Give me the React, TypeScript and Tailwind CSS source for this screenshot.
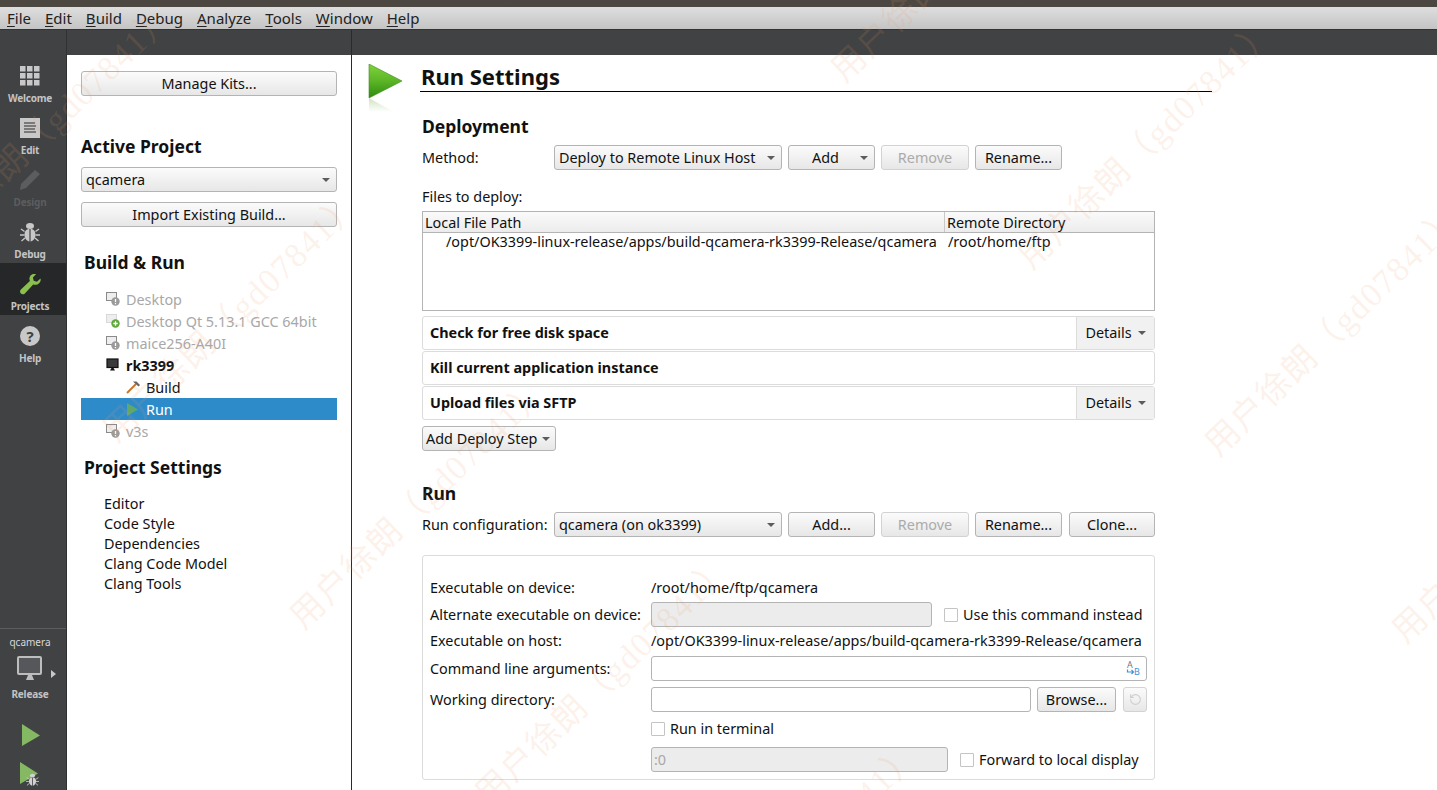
import { ReactNode } from "react";
import { RotateCcw } from "lucide-react";

const menus = ["File", "Edit", "Build", "Debug", "Analyze", "Tools", "Window", "Help"];

// watermark copies, written out so the classes get built
const marks = [
  "left-[960px] top-[-43px]",
  "left-[1147px] top-[144px]",
  "left-[1334px] top-[331px]",
  "left-[1521px] top-[518px]",
  "left-[45px] top-[130px]",
  "left-[232px] top-[317px]",
  "left-[419px] top-[504px]",
  "left-[604px] top-[681px]",
  "left-[791px] top-[868px]",
];

const Arrow = () => (
  <svg width="8" height="4" viewBox="0 0 8 4" className="shrink-0">
    <polygon points="0,0 8,0 4,4" fill="#5c5c5c" />
  </svg>
);

const Btn = ({ children, className = "", disabled = false }: { children: ReactNode; className?: string; disabled?: boolean }) => (
  <div
    className={`h-[25px] flex items-center justify-center rounded-[3px] border bg-linear-to-b from-[#fbfbfb] to-[#e7e7e7] shrink-0 ${
      disabled ? "border-[#d2d2d2] text-[#ababab]" : "border-[#b4b4b4] text-[#111]"
    } ${className}`}
  >
    {children}
  </div>
);

const Combo = ({ text, className = "" }: { text: string; className?: string }) => (
  <div className={`h-[25px] flex items-center justify-between pl-[4px] pr-[6px] rounded-[3px] border border-[#b4b4b4] bg-linear-to-b from-[#fbfbfb] to-[#e7e7e7] shrink-0 ${className}`}>
    <span>{text}</span>
    <Arrow />
  </div>
);

const Input = ({ className = "", disabled = false, children }: { className?: string; disabled?: boolean; children?: ReactNode }) => (
  <div className={`h-[25px] flex items-center rounded-[3px] border border-[#b4b4b4] shrink-0 ${disabled ? "bg-[#ececec]" : "bg-white"} ${className}`}>
    {children}
  </div>
);

const Check = ({ className = "" }: { className?: string }) => (
  <div className={`w-[14px] h-[14px] border border-[#c4c4c4] rounded-[1px] bg-white shrink-0 ${className}`} />
);

const SideItem = ({ label, icon, active = false, dim = false }: { label: string; icon: ReactNode; active?: boolean; dim?: boolean }) => (
  <div className={`h-[52px] pr-[6px] flex flex-col items-center ${active ? "bg-[#262728]" : ""}`}>
    <div className="h-[34px] pt-[11px] flex justify-center">{icon}</div>
    <div className={`text-[10px] tracking-[-0.2px] leading-[18px] font-bold ${dim ? "text-[#5c5d5e]" : "text-[#c4c4c4]"}`}>{label}</div>
  </div>
);

const GridIcon = () => (
  <svg width="20" height="20" viewBox="0 0 20 20" fill="#c8c8c8">
    {[0, 7, 14].map((y) =>
      [0, 7, 14].map((x) => <rect key={`${x}-${y}`} x={x} y={y} width="5.5" height="5.5" />)
    )}
  </svg>
);

const EditIcon = () => (
  <svg width="20" height="20" viewBox="0 0 20 20">
    <rect width="20" height="20" fill="#c8c8c8" />
    <path d="M4 5h11M4 8h12M4 11h11M4 14h12" stroke="#2b2b2b" strokeWidth="1" />
  </svg>
);

const PencilIcon = () => (
  <svg width="20" height="20" viewBox="0 0 20 20" fill="#5c5d5e">
    <path d="M15 0l5 4L6 18l-6 2 1-6z" />
  </svg>
);

const BugIcon = ({ size = 20, color = "#c8c8c8" }: { size?: number; color?: string }) => (
  <svg width={size} height={size} viewBox="0 0 20 20" fill={color}>
    <ellipse cx="10" cy="4" rx="4" ry="3" />
    <path d="M9.4 7C6 7 4.5 9.5 4.5 13c0 3.500 2.500 6 4.900 6.500zM10.600 7c3.400 0 4.900 2.500 4.900 6 0 3.500-2.500 6-4.900 6.500z" />
    <path d="M1 7l3.500 2.500M19 7l-3.500 2.500M0 13h4.500M20 13h-4.500M1.500 19l3.500-3M18.500 19l-3.500-3" stroke={color} strokeWidth="1.300" />
  </svg>
);

const WrenchIcon = () => (
  <svg width="21" height="21" viewBox="0 0 21 21" fill="#8bbf4f">
    <path d="M20.500 4.500l-3.600 3.200-3.200-.9-.8-3.200L16.200 0c-3-1-6.600.9-6.800 4.500 0 1 .2 1.700.5 2.400L.9 15.500c-1.300 1.300-1 3 0 4s2.800 1.300 4-.1l8.300-9c3.900 1.600 8.400-1.600 7.300-5.900z" />
  </svg>
);

const HelpIcon = () => (
  <svg width="20" height="20" viewBox="0 0 20 20">
    <circle cx="10" cy="10" r="10" fill="#c8c8c8" />
    <text x="10" y="15.500" textAnchor="middle" fontSize="15" fontWeight="700" fill="#404244" fontFamily="Noto Sans">?</text>
  </svg>
);

const SmallMonitor = ({ badge }: { badge?: "warn" | "add" | "none" }) => (
  <svg width="14" height="14" viewBox="0 0 14 14" className="shrink-0">
    {badge === "none" ? (
      <>
        <rect x="1" y="1" width="11" height="8.500" fill="#3a3a3a" stroke="#111" strokeWidth="1.200" />
        <path d="M4 12.500h5L7.500 10h-2z" fill="#111" />
      </>
    ) : (
      <>
        <rect x="0.500" y="0.500" width="10" height="8" fill="#eee" stroke={badge === "add" ? "#d8d8d8" : "#8a8a8a"} />
        <circle cx={9.500} cy={9.500} r="4.200" fill={badge === "add" ? "#5fa83a" : "#9a9a9a"} />
        {badge === "add" ? (
          <path d="M7.300 9.500h4.400M9.500 7.300v4.400" stroke="#fff" strokeWidth="1.300" />
        ) : (
          <path d="M9.500 7v3M9.500 11v1.200" stroke="#fff" strokeWidth="1.300" />
        )}
      </>
    )}
  </svg>
);

const TreeRow = ({ children, icon, className = "" }: { children: ReactNode; icon: ReactNode; className?: string }) => (
  <div className={`h-[22px] flex items-center pl-[25px] ${className}`}>
    <div className="w-[20px] shrink-0">{icon}</div>
    <span className="pt-px">{children}</span>
  </div>
);

const DetailRow = ({ title, details, className = "" }: { title: string; details?: boolean; className?: string }) => (
  <div className={`h-[34px] flex items-stretch border border-[#dcdcdc] rounded-[3px] bg-white ${className}`}>
    <div className="flex-1 flex items-center pl-[7px] font-bold text-[#111]">{title}</div>
    {details && (
      <div className="w-[78px] flex items-center justify-center gap-[6px] border-l border-[#dcdcdc] bg-[#f1f1f1]">
        <span>Details</span>
        <Arrow />
      </div>
    )}
  </div>
);

const FormRow = ({ label, children, className = "" }: { label?: string; children: ReactNode; className?: string }) => (
  <div className={`flex items-center ${className}`}>
    <div className="w-[221px] shrink-0 whitespace-nowrap">{label}</div>
    {children}
  </div>
);

export default function App() {
  return (
    <div className="relative w-[1437px] h-[790px] overflow-hidden flex flex-col bg-white text-[14.4px] leading-[18px] text-[#111] font-['Noto_Sans',sans-serif]">
      <div className="h-[7px] bg-[#4c4841] shrink-0" />

      {/* Menu bar */}
      <div className="h-[23px] shrink-0 flex items-center pl-[7px] gap-[14px] text-[15px] text-[#222] bg-linear-to-b from-[#dedede] to-[#c4c4c4] border-b border-[#333]">
        {menus.map((m) => (
          <span key={m}>
            <span className="underline underline-offset-2">{m[0]}</span>
            {m.slice(1)}
          </span>
        ))}
      </div>

      {/* Dark toolbar */}
      <div className="h-[25px] shrink-0 flex bg-[#404244]">
        <div className="w-[67px] border-r border-[#303132]" />
        <div className="w-[285px] border-r border-[#2a2a2a]" />
      </div>

      <div className="flex flex-1 min-h-0">
        {/* Mode bar */}
        <aside className="w-[67px] shrink-0 flex flex-col bg-[#404244] border-r border-[#303132]">
          <SideItem label="Welcome" icon={<GridIcon />} />
          <SideItem label="Edit" icon={<EditIcon />} />
          <SideItem label="Design" icon={<PencilIcon />} dim />
          <SideItem label="Debug" icon={<BugIcon />} />
          <SideItem label="Projects" icon={<WrenchIcon />} active />
          <SideItem label="Help" icon={<HelpIcon />} />

          <div className="mt-auto h-[162px] pr-[6px] border-t border-[#5d5e5f] flex flex-col items-center">
            <div className="mt-[6px] text-[10px] leading-[14px] text-[#d8d8d8]">qcamera</div>
            <div className="relative mt-[7px] h-[26px] flex justify-center w-full">
              <svg width="26" height="25" viewBox="0 0 26 25">
                <rect x="1" y="1" width="23" height="17" rx="1" fill="#55575a" stroke="#bdbdbd" strokeWidth="2" />
                <path d="M9 24h8l-2-5h-4z" fill="#bdbdbd" />
              </svg>
              <svg width="5" height="8" viewBox="0 0 5 8" className="absolute left-[51px] top-[14px]">
                <polygon points="0,0 5,4 0,8" fill="#c8c8c8" />
              </svg>
            </div>
            <div className="mt-[5px] text-[10px] tracking-[-0.2px] leading-[14px] font-bold text-[#c4c4c4]">Release</div>
            <svg width="19" height="23" viewBox="0 0 19 23" className="mt-[23px] ml-[2px]">
              <polygon points="0,0 18,11.500 0,22" fill="#85b862" />
            </svg>
            <div className="relative mt-[15px] ml-[2px] w-[22px] h-[23px]">
              <svg width="19" height="23" viewBox="0 0 19 23">
                <polygon points="0,0 18,11.500 0,22" fill="#85b862" />
              </svg>
              <div className="absolute left-[6px] top-[11px]">
                <BugIcon size={13} color="#d2d2d2" />
              </div>
            </div>
          </div>
        </aside>

        {/* Project panel */}
        <div className="w-[285px] shrink-0 border-r border-[#2a2a2a] px-[14px] pt-[16px]">
          <Btn className="w-[256px]">Manage Kits...</Btn>
          <div className="mt-[38px] text-[17.5px] leading-[24px] font-bold">Active Project</div>
          <Combo text="qcamera" className="mt-[9px] w-[256px]" />
          <Btn className="mt-[10px] w-[256px]">Import Existing Build...</Btn>

          <div className="mt-[23px] pl-[3px] text-[17.5px] leading-[24px] font-bold">Build &amp; Run</div>
          <div className="mt-[14px] w-[256px]">
            <TreeRow icon={<SmallMonitor badge="warn" />} className="text-[#a8a8a8]">Desktop</TreeRow>
            <TreeRow icon={<SmallMonitor badge="add" />} className="text-[#a8a8a8]">Desktop Qt 5.13.1 GCC 64bit</TreeRow>
            <TreeRow icon={<SmallMonitor badge="warn" />} className="text-[#a8a8a8]">maice256-A40I</TreeRow>
            <TreeRow icon={<SmallMonitor badge="none" />} className="font-bold">rk3399</TreeRow>
            <div className="h-[22px] flex items-center pl-[45px]">
              <svg width="14" height="14" viewBox="0 0 14 14" className="shrink-0">
                <path d="M1 13L10 4" stroke="#c8762a" strokeWidth="2" />
                <path d="M7 1.500h3.500L14 5l-1.500 1.500L8.500 3z" fill="#666" />
              </svg>
              <span className="ml-[6px] pt-px">Build</span>
            </div>
            <div className="h-[22px] flex items-center pl-[46px] bg-[#2e8bc9] text-white">
              <svg width="11" height="13" viewBox="0 0 11 13" className="shrink-0">
                <polygon points="0,0 11,6.500 0,13" fill="#5fa86a" />
              </svg>
              <span className="ml-[8px] pt-px">Run</span>
            </div>
            <TreeRow icon={<SmallMonitor badge="warn" />} className="text-[#a8a8a8]">v3s</TreeRow>
          </div>

          <div className="mt-[13px] pl-[3px] text-[17.5px] leading-[24px] font-bold">Project Settings</div>
          <div className="mt-[14px] pl-[23px] flex flex-col">
            {["Editor", "Code Style", "Dependencies", "Clang Code Model", "Clang Tools"].map((s) => (
              <div key={s} className="h-[20px] pt-px flex items-center">{s}</div>
            ))}
          </div>
        </div>

        {/* Settings */}
        <main className="flex-1 min-w-0">
          <div className="h-[59px] flex pt-[9px] pl-[16px]">
            <svg width="36" height="48" viewBox="0 0 36 48" className="shrink-0">
              <defs>
                <linearGradient id="playFill" x1="0" y1="0" x2="0" y2="1">
                  <stop offset="0" stopColor="#7fd43a" />
                  <stop offset="0.5" stopColor="#5cb526" />
                  <stop offset="1" stopColor="#2d8a10" />
                </linearGradient>
                <linearGradient id="playShade" x1="0" y1="0" x2="0" y2="1">
                  <stop offset="0" stopColor="#cfe3c4" />
                  <stop offset="1" stopColor="#ffffff" />
                </linearGradient>
              </defs>
              <polygon points="1,0 34,17 1,34" fill="url(#playFill)" stroke="#3f8a20" strokeWidth="0.600" />
              <polygon points="1,34 26,48 1,48" fill="url(#playShade)" />
            </svg>
            <div className="ml-[16px] w-[792px] h-[28px] pl-px border-b border-black text-[22px] leading-[25px] font-bold">
              Run Settings
            </div>
          </div>

          <div className="ml-[70px] w-[733px]">
            <div className="text-[17.5px] leading-[24px] font-bold">Deployment</div>
            <div className="mt-[7px] flex items-center">
              <div className="w-[132px] shrink-0">Method:</div>
              <Combo text="Deploy to Remote Linux Host" className="w-[228px]" />
              <Btn className="ml-[6px] w-[87px] pr-[12px] relative">
                Add
                <div className="absolute right-[6px] top-[10px]"><Arrow /></div>
              </Btn>
              <Btn disabled className="ml-[6px] w-[88px]">Remove</Btn>
              <Btn className="ml-[6px] w-[87px]">Rename...</Btn>
            </div>

            <div className="mt-[17px] h-[20px] flex items-center">Files to deploy:</div>
            <div className="mt-[4px] h-[100px] border border-[#b4b4b4]">
              <div className="h-[21px] flex items-end bg-linear-to-b from-[#fafafa] to-[#ececec] border-b border-[#b4b4b4]">
                <div className="w-[522px] h-full flex items-end pl-[2px] border-r border-[#c8c8c8]">Local File Path</div>
                <div className="pl-[2px]">Remote Directory</div>
              </div>
              <div className="flex h-[18px] items-center">
                <div className="w-[522px] pl-[23px] whitespace-nowrap">/opt/OK3399-linux-release/apps/build-qcamera-rk3399-Release/qcamera</div>
                <div className="pl-[3px]">/root/home/ftp</div>
              </div>
            </div>

            <DetailRow title="Check for free disk space" details className="mt-[5px]" />
            <DetailRow title="Kill current application instance" className="mt-[1px]" />
            <DetailRow title="Upload files via SFTP" details className="mt-[1px]" />

            <Btn className="mt-[6px] w-[134px] gap-[5px] !justify-start pl-[3px]">
              Add Deploy Step
              <Arrow />
            </Btn>

            <div className="mt-[30px] text-[17.5px] leading-[24px] font-bold">Run</div>
            <div className="mt-[7px] flex items-center">
              <div className="w-[132px] shrink-0 whitespace-nowrap">Run configuration:</div>
              <Combo text="qcamera (on ok3399)" className="w-[228px]" />
              <Btn className="ml-[6px] w-[87px]">Add...</Btn>
              <Btn disabled className="ml-[6px] w-[88px]">Remove</Btn>
              <Btn className="ml-[6px] w-[87px]">Rename...</Btn>
              <Btn className="ml-[7px] w-[86px]">Clone...</Btn>
            </div>

            <div className="mt-[18px] h-[225px] border border-[#dcdcdc] rounded-[3px] pl-[7px] pr-[7px] pt-[23px]">
              <FormRow label="Executable on device:" className="h-[18px]">/root/home/ftp/qcamera</FormRow>
              <FormRow label="Alternate executable on device:" className="mt-[5px]">
                <Input disabled className="w-[281px]" />
                <Check className="ml-[12px]" />
                <span className="ml-[5px] whitespace-nowrap">Use this command instead</span>
              </FormRow>
              <FormRow label="Executable on host:" className="mt-[5px] h-[18px]">
                <span className="whitespace-nowrap">/opt/OK3399-linux-release/apps/build-qcamera-rk3399-Release/qcamera</span>
              </FormRow>
              <FormRow label="Command line arguments:" className="mt-[6px]">
                <Input className="w-[496px] justify-end pr-[5px]">
                  <svg width="16" height="17" viewBox="0 0 16 17" className="text-[#3d93d8]">
                    <text x="2" y="8" fontSize="9" fill="#777" fontFamily="Noto Sans">A</text>
                    <text x="9" y="15" fontSize="9" fill="currentColor" fontFamily="Noto Sans">B</text>
                    <path d="M2.500 9.500v2.500h6M6.500 10l2 2-2 2" fill="none" stroke="currentColor" strokeWidth="1.200" />
                  </svg>
                </Input>
              </FormRow>
              <FormRow label="Working directory:" className="mt-[6px]">
                <Input className="w-[380px]" />
                <Btn className="ml-[6px] w-[79px]">Browse...</Btn>
                <Btn disabled className="ml-[7px] w-[24px] h-[24px]">
                  <RotateCcw size={13} className="text-[#cfcfcf]" />
                </Btn>
              </FormRow>
              <FormRow className="mt-[8px] h-[18px]">
                <Check />
                <span className="ml-[5px]">Run in terminal</span>
              </FormRow>
              <FormRow className="mt-[9px]">
                <Input disabled className="w-[297px] pl-[2px] text-[#a8a8a8]">:0</Input>
                <Check className="ml-[12px]" />
                <span className="ml-[5px] whitespace-nowrap">Forward to local display</span>
              </FormRow>
            </div>
          </div>
        </main>
      </div>

      {/* Watermark */}
      {marks.map((pos) => (
        <div
          key={pos}
          className={`absolute ${pos} -translate-x-1/2 -translate-y-1/2 rotate-[-44deg] whitespace-nowrap pointer-events-none text-[34px] tracking-[1.5px] leading-none text-[#f29a62]/15 font-['Liberation_Serif','Noto_Sans_CJK_SC',serif]`}
        >
          用户徐朗（gd07841）
        </div>
      ))}
    </div>
  );
}
